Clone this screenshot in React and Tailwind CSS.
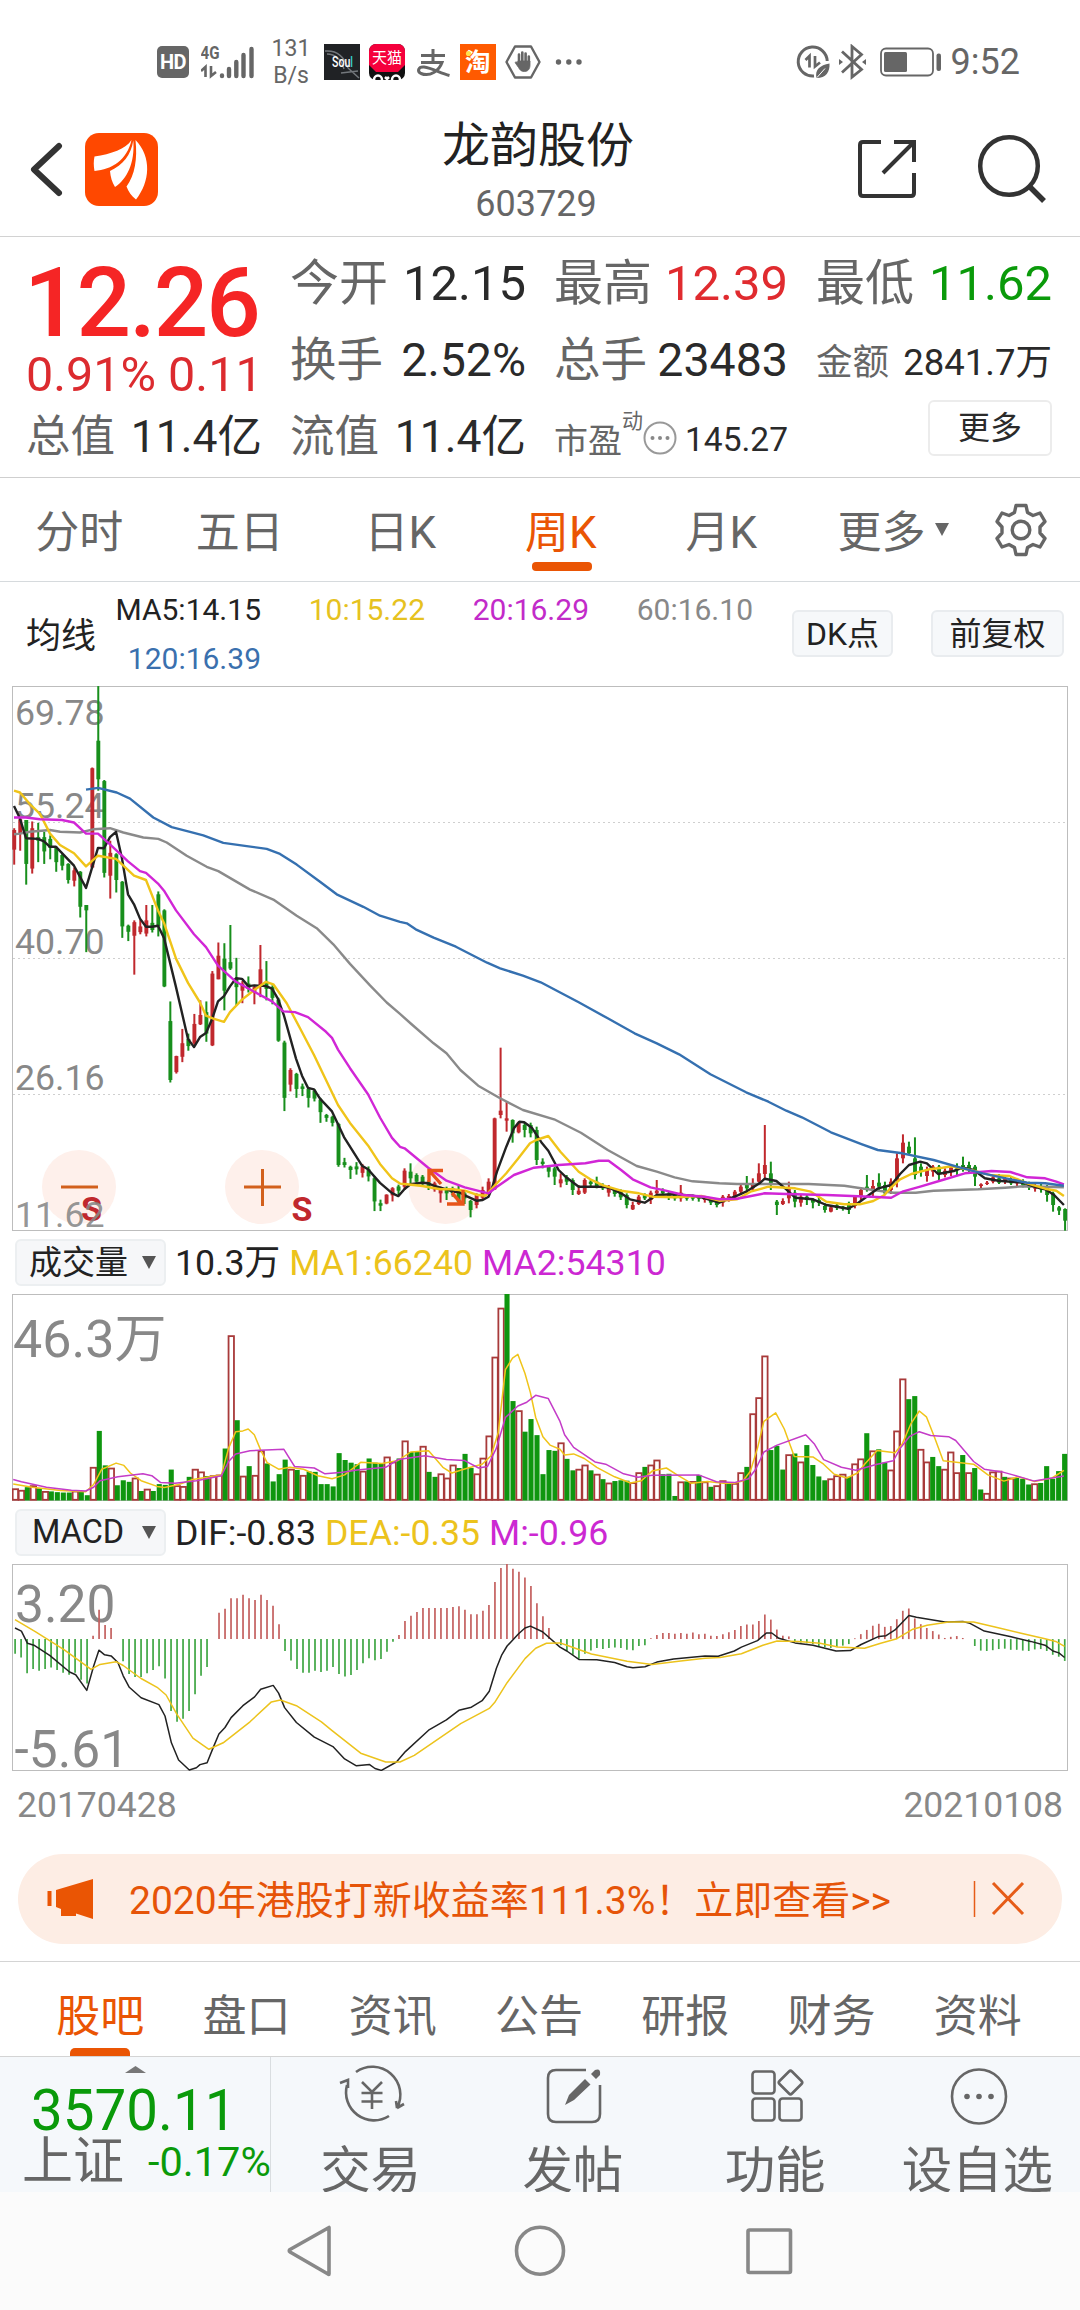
import clsx from 'clsx'

// Weekly K-line screen for a single stock: quote summary, candles + MA lines,
// volume, MACD, promo banner and the bottom action bar.

const RED = '#c0282d'
const GREEN = '#188f1c'
const STEP = 6.005

// colour, high, low, body top, body bottom (one entry per week)
const EARLY = `r 415 517 420 475;r 385 478 390 430;g 392 573 392 515;r 396 542 415 528;g 400 510 440 450;g 425 515 440 480;g 435 502 445 470;g 465 537 470 510;g 485 533 490 520;g 513 570 515 560;r 525 578 533 562;g 535 665 537 635;g 630 762 630 645;r 245 527 247 525;g 17 310 170 278;g 280 553 283 540;r 450 612 484 548;g 485 595 488 560;g 563 722 565 690;g 685 731 688 705;r 673 825 678 716;r 670 712 690 706;r 630 718 673 710;g 630 707 680 700;g 592 718 600 690;g 642 860 645 858;g 900 1127 955 1120;r 1052 1102 1053 1098;r 977 1070 1017 1055;g 990 1038 1005 1025;r 935 1025 963 1018;r 897 966 938 964;g 900 1013 930 990;r 815 1025 822 1023;r 735 838 772 838;g 737 925 780 870;g 686 812 790 808;g 778 910 835 860;r 843 905 850 870;g 830 875 850 865;r 855 908 860 875;r 742 888 810 855;g 787 897 845 865;g 855 908 860 890;g 890 1013 895 1010;g 1010 1207 1015 1170;r 1087 1152 1092 1133;g 1100 1170 1103 1145;g 1130 1165 1138 1145;g 1143 1197 1145 1170;g 1145 1180 1150 1172;g 1170 1240 1175 1210;g 1215 1237 1218 1226;g 1220 1250 1223 1240;g 1240 1363 1243 1358;g 1338 1365 1350 1358;g 1360 1397 1363 1372;g 1350 1385 1362 1370;r 1355 1393 1362 1380;g 1362 1404 1370 1390;g 1390 1487 1395 1460;g 1455 1487 1465 1472;r 1440 1468 1441 1466;r 1420 1460 1423 1443;g 1413 1440 1418 1430`
const LATE = `r 805 870 812 860;g 790 850 815 835;g 820 855 825 845;g 825 860 830 850;g 840 870 845 860;r 845 875 850 868;r 860 908 865 880;g 860 900 865 880;g 860 890 865 880;g 858 915 870 905;g 875 912 880 895;g 900 952 903 930;r 880 925 885 915;r 860 900 870 893;r 835 885 845 880;r 653 870 655 868;r 443 655 632 645;r 605 695 655 662;g 658 728 660 700;r 665 700 668 697;g 668 712 675 690;g 668 712 675 700;g 680 795 690 780;g 775 805 785 792;g 795 832 800 815;g 800 855 805 830;r 820 862 838 850;g 825 855 832 845;g 835 885 840 870;r 855 885 872 882;r 835 882 840 878;g 840 862 845 852;g 830 865 845 858;g 850 870 855 865;r 855 890 862 878;g 865 890 870 882;g 868 900 875 892;g 880 925 885 915;r 905 930 915 928;r 885 915 890 912;g 880 900 885 895;r 872 912 878 900;r 840 885 872 880;g 865 885 872 880;g 875 900 880 892;g 882 902 885 895;r 855 905 878 895;g 882 902 886 896;g 884 902 888 896;g 885 905 888 896;r 888 908 890 900;g 892 915 896 908;g 900 922 905 915;r 885 920 890 908;r 882 905 888 898;r 870 900 875 893;r 853 885 860 875;g 828 880 850 865;r 835 872 850 865;r 790 848 820 845;r 675 840 795 822;g 785 870 820 850;g 900 945 905 915;r 895 915 903 912;r 845 910 865 895;g 870 922 878 905;r 885 920 890 908;g 882 915 890 900;g 895 925 898 908;g 892 918 900 908;g 910 938 918 930;r 915 937 922 935;g 912 930 916 924;g 918 932 920 926;g 905 942 915 930;r 885 925 890 918;r 862 900 870 890;g 825 875 860 870;r 840 892 858 868;g 820 870 848 860;g 845 885 855 880;r 835 882 845 870;r 760 862 775 840;r 703 790 728 775;g 725 765 740 760;g 712 838 775 825;g 790 830 800 815;r 800 845 808 828;r 795 830 800 815;g 795 842 800 820;r 805 832 812 825;r 795 828 802 815;g 790 825 798 806;g 770 815 795 810;g 785 820 795 810;g 795 858 800 830;r 850 865 853 858;r 843 855 848 852;r 825 850 832 845;g 822 852 835 848;r 828 852 835 845;g 830 855 840 850;r 835 858 840 850;g 838 862 845 855;g 845 870 852 862;r 852 875 857 866;g 850 878 858 868;g 855 905 860 885;g 875 935 880 915;g 918 945 922 932;g 925 992 927 962`

function parseCandles(src, oy, sy) {
  return src.split(';').map(row => {
    const [color, ...v] = row.split(' ')
    const [high, low, top, bottom] = v.map(n => oy + Number(n) / sy)
    return { color: color === 'r' ? RED : GREEN, high, low, top, bottom }
  })
}

const CANDLES = [...parseCandles(EARLY, 680, 2.8), ...parseCandles(LATE, 900, 3)]

// each line has an early and a late part, stored at different scales
const PRICE_SCALE = [[0, 680, 3, 2.8], [380, 900, 2.24, 3]]
const INDEX_SCALE = [[0, 1230, 2.8, 2.613], [520, 1230, 2.8, 2.613]]

const MA_LINES = [
  { color: '#8a8a8a', parts: [
    '42,432 60,430 90,425 150,420 180,425 240,427 280,418 330,415 370,427 430,441 475,445 500,455 560,492 620,523 655,535 750,587 820,615 890,660 950,695 1000,740 1050,795 1110,855 1160,903 1200,935',
    '70,372 120,430 149,460 180,510 220,557 269,595 320,630 390,658 450,698 510,750 575,798 620,815 660,832 700,844 760,850 800,852 960,852 1040,857 1089,867 1150,878 1200,878 1240,872 1340,868 1400,863 1440,859 1532,862'] },
  { color: '#222222', parts: [
    '42,353 60,388 78,443 114,445 132,452 150,467 168,467 222,520 258,582 294,470 312,471 330,440 348,425 366,500 384,600 402,628 420,668 438,691 456,691 474,688 492,722 528,860 564,1005 582,1028 600,1000 618,988 636,950 654,900 672,885 690,858 708,835 726,837 745,857 763,855 798,857 816,864 834,893 852,940 888,1060 906,1108 924,1142 942,1146 960,1172 996,1208 1032,1280 1086,1360 1104,1370 1140,1408 1176,1437 1195,1445',
    '55,867 68,853 95,848 108,850 122,858 149,868 163,875 176,876 190,886 216,902 230,900 243,890 250,868 262,815 283,740 300,685 312,665 323,667 340,683 363,730 377,752 400,810 417,832 445,860 500,860 517,865 540,880 560,898 593,908 620,885 660,883 700,887 720,892 760,908 800,887 820,875 850,850 862,836 888,843 910,868 930,893 970,898 1000,915 1049,926 1070,910 1090,890 1116,865 1145,855 1165,822 1185,795 1210,785 1225,790 1250,822 1285,813 1305,803 1330,810 1355,835 1385,842 1440,848 1470,862 1490,868 1510,885 1532,915'] },
  { color: '#f0c419', parts: [
    '42,310 60,315 90,348 120,375 150,430 180,462 222,485 258,522 294,492 348,501 366,516 402,548 438,560 474,645 492,680 528,780 564,848 600,903 618,940 640,948 672,957 690,930 726,895 763,868 798,845 820,852 860,905 900,975 942,1050 1014,1190 1050,1240 1104,1303 1140,1355 1176,1395 1200,1410',
    '60,853 95,858 135,868 163,868 190,872 216,884 236,887 256,858 283,820 310,775 336,730 350,720 377,708 404,755 445,815 471,838 500,856 540,872 580,880 610,890 660,892 720,888 760,902 800,898 830,875 870,860 930,865 965,875 1000,905 1040,913 1075,913 1105,903 1130,885 1145,862 1165,838 1190,822 1230,808 1260,803 1280,799 1330,812 1370,826 1410,828 1450,850 1490,866 1515,872 1532,888'] },
  { color: '#d126d6', parts: [
    '42,385 78,385 120,390 186,392 222,399 258,430 294,430 330,460 384,508 420,535 438,540 474,570 492,590 528,645 582,712 618,748 654,800 708,845 763,873 816,900 850,928 885,930 924,944 978,985 996,1002 1014,1035 1050,1087 1104,1160 1140,1225 1176,1282 1200,1307',
    '55,745 108,803 149,842 190,862 243,880 262,860 300,825 345,803 400,795 460,790 490,782 512,782 540,810 566,838 606,862 640,872 680,885 727,890 760,898 800,896 862,880 910,882 1000,885 1100,890 1145,893 1170,875 1210,860 1260,840 1310,820 1370,813 1412,816 1450,832 1490,835 1515,845 1532,853'] },
  { color: '#3570b0', parts: [
    '258,307 294,302 350,315 390,332 460,385 515,412 570,425 610,435 670,456 740,465 800,473 840,487 890,517 960,565 1010,600 1090,635 1140,660 1200,677',
    '60,70 80,88 120,113 170,140 240,188 269,205 320,227 360,247 445,307 510,355 570,400 620,430 670,463 740,523 820,577 870,605 910,632 945,652 1010,697 1080,733 1115,750 1170,760 1240,780 1300,803 1350,820 1412,838 1450,848 1490,850 1532,857'] },
]

const VOLUME = 'r676 r680 g672 r668 g675 r683 g683 g685 g686 g686 r682 g682 g693 r620 g525 g615 r622 g667 g654 g658 r648 g682 r677 g682 g664 g666 g626 r668 r670 g645 r625 r632 g643 r642 r640 g571 r276 g497 r643 g617 r641 r577 g610 g657 g638 g600 r625 g627 r641 g631 g632 g664 g664 g670 g583 g601 g608 g612 r630 g597 g608 g610 r593 r606 g597 r551 g580 g580 r565 g632 g645 r637 r648 r614 g622 g585 g622 r637 r596 r538 r332 r204 g167 g447 r472 g527 g494 g536 g638 g575 g577 r556 g598 g628 r625 r614 g628 r638 g651 r661 g656 g654 g655 r660 r634 g619 r614 r601 g638 g637 g695 r658 g657 r657 g640 r658 g671 r668 r655 g662 r662 r634 g619 r480 r438 r329 g575 g564 g626 r587 g584 r606 g562 g614 g644 g654 r650 r642 r638 g645 r611 r598 g531 r577 g573 g608 r627 r525 r389 g442 g434 r573 r606 g593 g617 r625 r580 r634 g588 r634 g622 g678 r688 r632 r630 g645 r648 g648 g650 g665 r663 g661 g617 g650 g630 g585'
  .split(' ')
  .map(s => ({ up: s[0] === 'r', y: 1230 + Number(s.slice(1)) / 2.613 }))

const VOLUME_LINES = [
  { color: '#f0c419', parts: [
    '37,664 90,672 170,681 240,684 262,665 285,625 325,609 347,615 365,635 395,655 440,670 460,673 500,665 540,652 620,640 640,570 660,527 680,525 695,520 712,535 730,575 748,608 780,625 812,620 850,625 890,642 930,650 965,640 1010,607 1070,610 1115,602 1150,580 1200,577 1240,620 1265,635 1310,622 1350,612 1375,590 1395,530 1415,365 1435,335 1450,325 1470,375 1485,425 1500,490 1520,540 1540,562 1568,573',
    '125,588 150,585 180,597 215,620 265,645 310,661 340,655 370,630 410,622 440,640 480,662 525,657 570,662 600,662 625,655 645,630 665,570 683,500 716,478 740,520 768,592 820,593 850,612 880,638 915,648 945,635 965,612 1000,576 1050,582 1070,560 1095,505 1118,473 1138,488 1160,540 1185,603 1270,612 1310,640 1355,656 1395,645 1440,657 1490,648 1523,628'] },
  { color: '#c43cc8', parts: [
    '37,652 60,658 130,672 200,680 240,682 262,672 280,655 330,645 400,637 425,642 450,660 490,662 550,655 620,642 640,605 660,585 700,577 795,573 825,618 880,622 910,637 960,633 1000,627 1080,620 1115,600 1150,595 1190,590 1250,600 1300,602 1340,622 1365,618 1390,570 1415,490 1450,460 1475,450 1500,432 1535,440 1568,500',
    '125,535 150,568 210,606 240,612 290,637 330,646 370,641 500,640 550,658 600,660 640,650 660,625 683,580 720,562 800,535 825,560 850,600 900,620 940,628 1000,612 1045,603 1065,570 1090,540 1118,527 1150,537 1200,540 1220,550 1270,605 1300,625 1350,632 1380,640 1440,656 1490,648 1523,643'] },
]

// bar ends; 1069 is the zero line, 0 means no bar
const ZERO = 1069
const MACD_BARS = [
  1107, 1117, 1158, 1147, 1152, 1147, 1143, 1150, 1157, 1162, 1157, 1175, 1185, 1060, 992, 1032, 1040, 0, 1127, 1160,
  1168, 1168, 1158, 1150, 1140, 1172, 1257, 1285, 1277, 1257, 1213, 1165, 1142, 0, 1000, 990, 962, 962, 953, 962,
  967, 953, 967, 982, 1030, 1100, 1125, 1147, 1157, 1157, 1152, 1155, 1152, 1142, 1160, 1167, 1163, 1150, 1132, 1119,
  1124, 1121, 1102, 1076, 1058, 1022, 1008, 998, 988, 988, 988, 988, 988, 985, 983, 992, 1004, 1004, 995, 980,
  920, 883, 872, 885, 893, 908, 930, 975, 1009, 1040, 0, 1085, 1100, 1110, 1120, 1107, 1099, 1092, 1095, 1092,
  1091, 1092, 1097, 1098, 1087, 1085, 1067, 1058, 1053, 1053, 1055, 1053, 1055, 1052, 1056, 1055, 1060, 1061, 1056, 1051,
  1045, 1035, 1031, 1031, 1022, 1005, 1018, 1044, 1060, 1062, 1076, 1078, 1080, 1082, 1087, 1090, 1092, 1090, 1086, 1082,
  1067, 1056, 1045, 1034, 1029, 1037, 1035, 1017, 995, 989, 1015, 1030, 1040, 1048, 1057, 1066, 1063, 1061, 1066, 0,
  1087, 1099, 1100, 1098, 1095, 1094, 1097, 1097, 1099, 1100, 1096, 1095, 1100, 1110, 1115, 1126,
]

const MACD_LINES = [
  { color: '#222222', parts: [
    '42,1040 60,1048 77,1080 95,1085 140,1112 195,1155 212,1162 243,1203 262,1140 277,1098 293,1110 311,1113 330,1130 345,1165 362,1195 395,1222 445,1240 462,1270 480,1340 500,1385 530,1411 550,1405 560,1397 580,1392 598,1350 613,1317 630,1300 647,1274 680,1243 713,1220 730,1200 765,1190 780,1210 797,1248 830,1287 880,1325 932,1350 965,1382 998,1400 1035,1397 1050,1407 1068,1412 1110,1390 1135,1363 1200,1307 1250,1280 1285,1255 1320,1247 1350,1230 1370,1205 1390,1145 1405,1110 1420,1087 1452,1055 1470,1040 1485,1035 1519,1050 1568,1090',
    '131,1100 165,1122 215,1123 265,1130 300,1141 316,1144 350,1141 383,1129 430,1121 518,1113 555,1114 600,1100 620,1090 665,1073 690,1053 705,1053 725,1067 770,1079 820,1085 885,1100 925,1099 955,1083 1005,1062 1025,1060 1050,1045 1089,1007 1110,1012 1190,1024 1240,1023 1260,1028 1300,1048 1375,1063 1430,1075 1470,1085 1492,1100 1509,1105 1525,1117'] },
  { color: '#ecc31c', parts: [
    '42,1018 100,1050 180,1097 255,1148 280,1135 325,1128 345,1138 395,1172 440,1195 465,1215 495,1265 540,1328 585,1357 625,1340 700,1285 760,1233 785,1228 830,1243 900,1285 930,1308 1010,1367 1080,1390 1120,1390 1160,1373 1290,1290 1370,1250 1385,1235 1420,1183 1470,1120 1500,1093 1530,1080 1568,1079',
    '131,1085 200,1108 300,1127 370,1135 450,1126 518,1119 560,1117 620,1107 680,1085 720,1074 780,1075 840,1080 890,1090 965,1093 1010,1080 1055,1068 1100,1043 1140,1033 1200,1024 1270,1024 1330,1037 1400,1053 1470,1068 1500,1075 1525,1088'] },
]

function toPoints(parts, scales) {
  return parts
    .map((part, i) => {
      const [ox, oy, sx, sy] = scales[i]
      return part.split(' ').map(p => {
        const [x, y] = p.split(',').map(Number)
        return `${(ox + x / sx).toFixed(1)},${(oy + y / sy).toFixed(1)}`
      }).join(' ')
    })
    .join(' ')
}

function Lines({ lines, scales, width }) {
  return lines.map(l => (
    <polyline key={l.color} points={toPoints(l.parts, scales)} fill="none" stroke={l.color} strokeWidth={width} strokeLinejoin="round" />
  ))
}

function PriceChart() {
  return (
    <svg className="block ml-3" width="1056" height="545" viewBox="12 686 1056 545">
      <rect x="12.5" y="686.5" width="1055" height="544" fill="none" stroke="#bdbdbd" />
      {[822.5, 958.5, 1094.5].map(y => (
        <line key={y} x1="13" x2="1067" y1={y} y2={y} stroke="#cfcfcf" strokeDasharray="2 3" />
      ))}
      <g fill="#888888" fontFamily="Roboto, sans-serif" fontSize="35.7">
        <text x="15" y="725">69.78</text>
        <text x="15" y="817.5">55.24</text>
        <text x="15" y="953.5">40.70</text>
        <text x="15" y="1089.5">26.16</text>
      </g>
      {[79, 262, 445.5].map(x => <circle key={x} cx={x} cy="1187" r="37" fill="#fef0eb" />)}
      {CANDLES.map((c, i) => {
        const x = 14.2 + i * STEP
        return (
          <g key={i} fill={c.color}>
            <rect x={x - 1} y={c.high} width="2" height={c.low - c.high} />
            <rect x={x - 1.9} y={c.top} width="3.9" height={c.bottom - c.top} />
          </g>
        )
      })}
      <Lines lines={MA_LINES} scales={PRICE_SCALE} width="2.4" />
      <g fill={RED} fontFamily="Roboto, sans-serif" fontSize="34" fontWeight="700">
        <text x="81" y="1221">S</text>
        <text x="291.5" y="1221">S</text>
      </g>
      <text x="15" y="1226.5" fill="#888888" fillOpacity="0.9" fontFamily="Roboto, sans-serif" fontSize="35.7">11.62</text>
      <g stroke="#d2601c" strokeWidth="3" fill="none">
        <path d="M61 1187H98M244 1187H281M262.500 1169V1206" />
        <path d="M429 1182V1170.500H443M430 1171.500L441 1184M452 1193L461 1203M463 1190V1204H447" stroke="#e8541a" strokeWidth="3.400" />
      </g>
    </svg>
  )
}

function VolumeChart() {
  const base = 1500
  return (
    <svg className="block ml-3" width="1056" height="207" viewBox="12 1294 1056 207">
      <rect x="12.5" y="1294.500" width="1055" height="206" fill="none" stroke="#bdbdbd" />
      {VOLUME.map((v, i) => {
        const x = 15.3 + i * 5.996
        return v.up
          ? <rect key={i} x={x - 2.6} y={v.y + 0.5} width="5.4" height={base - v.y - 0.7} fill="#ffffff" stroke="#a83a3a" strokeWidth="1.8" />
          : <rect key={i} x={x - 2.5} y={v.y} width="5.1" height={base - v.y + 0.5} fill="#0f960f" />
      })}
      <text x="13" y="1357" fill="#888888" className="font-[Roboto,'Noto_Sans_CJK_SC',sans-serif]" fontSize="52">46.3万</text>
      <Lines lines={VOLUME_LINES} scales={INDEX_SCALE} width="1.5" />
    </svg>
  )
}

function MacdChart() {
  const zero = 1230 + ZERO / 2.613
  return (
    <svg className="block ml-3" width="1056" height="207" viewBox="12 1564 1056 207">
      <rect x="12.5" y="1564.500" width="1055" height="206" fill="none" stroke="#bdbdbd" />
      <g fill="#888888" fontFamily="Roboto, sans-serif" fontSize="51.500">
        <text x="15" y="1621.500">3.20</text>
        <text x="14.500" y="1767">-5.61</text>
      </g>
      {MACD_BARS.map((v, i) => {
        if (!v) return null
        const x = 15.1 + i * 5.998
        return <line key={i} x1={x} x2={x} y1={zero} y2={1230 + v / 2.613} stroke={v > ZERO ? '#3fa643' : '#c4605f'} strokeWidth="1.7" />
      })}
      <Lines lines={MACD_LINES} scales={INDEX_SCALE} width="1.5" />
    </svg>
  )
}

function StatusBar() {
  return (
    <div className="flex h-[118px] items-start justify-between pl-[157px] pr-[60px] pt-[36px] text-[#666]">
      <div className="flex h-[52px] items-center">
        <div className="flex h-8 w-8 items-center justify-center rounded-[5px] bg-[#666] text-[20px] font-bold leading-none tracking-tight text-white">HD</div>
        <svg className="ml-3" width="54" height="34" viewBox="0 0 54 34">
          <text x="-0.500" y="13.500" fontFamily="Roboto, sans-serif" fontSize="18" fontWeight="700" fill="#666" textLength="19" lengthAdjust="spacingAndGlyphs">4G</text>
          <g stroke="#666" strokeWidth="2.600" fill="none">
            <path d="M4.500 32V22L0 26M10 21V31L15 27" />
          </g>
          <g stroke="#666" strokeWidth="4.400" strokeLinecap="round">
            <path d="M21 30.500V31M28 24V31M35.300 17V31M42.500 10V31M50.500 4V31" />
          </g>
        </svg>
        <div className="ml-[15px] w-[42px] text-center text-[23px] leading-[27px]">
          <div>131</div>
          <div>B/s</div>
        </div>
        <svg className="ml-[12px]" width="36" height="36" viewBox="0 0 36 36">
          <rect width="36" height="36" fill="#202225" />
          <path d="M1 7C12 6 20 12 24 24M3 10C12 10 17 15 20 25M24 24L35 34M17 29L34 27" fill="none" stroke="#73777c" strokeWidth="1.500" />
          <text x="8" y="23" fontFamily="Roboto, sans-serif" fontSize="15" fontWeight="500" fill="#fff" textLength="21" lengthAdjust="spacingAndGlyphs">
            Sou<tspan fill="#35d6d0">l</tspan>
          </text>
        </svg>
        <svg className="ml-[9px]" width="36" height="36" viewBox="0 0 36 36">
          <rect width="36" height="36" rx="7" fill="#111" />
          <path d="M7 0H29a7 7 0 0 1 7 7V21L29 28H7L0 21V7a7 7 0 0 1 7-7z" fill="#f5003c" />
          <text x="3" y="19" fontSize="15" fill="#fff" className="font-['Noto_Sans_CJK_SC',sans-serif]">天猫</text>
          <path d="M5 36a4 4.500 0 0 1 8 0M23 36a4 4.500 0 0 1 8 0M16 33l2 2 2-2" fill="none" stroke="#fff" strokeWidth="2.500" />
        </svg>
        <svg className="ml-[12px]" width="34" height="36" viewBox="0 0 34 36" fill="none" stroke="#666" strokeWidth="3">
          <path d="M4 11.500H28M16 5V17.500M4 18.500H25C22 27 13 33 4 29.500 0 27.500 1 22.500 7 23 15 24 23 29 32.500 31.500" />
        </svg>
        <svg className="ml-[9px]" width="36" height="36" viewBox="0 0 36 36">
          <rect width="36" height="36" fill="#ff5a00" />
          <text x="5" y="27" fontSize="25.500" fontWeight="700" fill="#fff" className="font-['Noto_Sans_CJK_SC',sans-serif]">淘</text>
          <circle cx="8.500" cy="9.500" r="2.600" fill="#ffe14a" />
        </svg>
        <svg className="ml-[9px]" width="36" height="36" viewBox="0 0 36 36" fill="none" stroke="#666">
          <path d="M10 2.500H26L34.500 18L26 33.500H10L1.500 18z" strokeWidth="2.400" strokeLinejoin="round" />
          <path d="M14 18V10.500M17.300 17V8.500M20.600 17V9.500M23.800 18V12.500" strokeWidth="2.600" strokeLinecap="round" />
          <path d="M12.800 17H25V21c0 4-2 6.500-5.500 6.500-3.500 0-4.500-1.500-6-4L10 18.500c1-1 2-.6 2.800.5z" fill="#666" strokeWidth="0.800" />
        </svg>
        <svg className="ml-[14px]" width="28" height="6" viewBox="0 0 28 6" fill="#666">
          <circle cx="3.500" cy="3" r="2.700" /><circle cx="13.800" cy="3" r="2.700" /><circle cx="24" cy="3" r="2.700" />
        </svg>
      </div>
      <div className="flex h-[52px] items-center">
        <svg width="34" height="34" viewBox="0 0 34 34" fill="none" stroke="#666">
          <path d="M31.200 16A14.500 14.500 0 1 0 18 31" strokeWidth="3" />
          <path d="M13.500 22.500V11L9.500 15M19 11V21.500L24 17.500" strokeWidth="2.700" />
          <path d="M20.500 33C18.500 25 24 20 33.500 18.500 34 27 30 33 20.500 33z" fill="#666" stroke="none" />
          <path d="M21 32.500L29 23.500" stroke="#fff" strokeWidth="1" />
        </svg>
        <svg className="ml-[9px]" width="28" height="36" viewBox="0 0 28 36" fill="none" stroke="#666" strokeWidth="2.800">
          <path d="M3 7.500L22.500 25.500L13 33V2.500L22.500 10.500L3 28.500" />
          <path d="M0 15l4 3-4 3zM27 15l-4 3 4 3z" fill="#666" stroke="none" />
        </svg>
        <svg className="ml-[13px]" width="62" height="30" viewBox="0 0 62 30">
          <rect x="1" y="1.500" width="52" height="27" rx="5" fill="none" stroke="#666" strokeWidth="1.800" />
          <rect x="4" y="5" width="23" height="20" rx="1.500" fill="#666" />
          <rect x="56.500" y="6.500" width="4.500" height="17.500" rx="2" fill="#666" />
        </svg>
        <span className="ml-[9px] text-[36px] leading-[54px]">9:52</span>
      </div>
    </div>
  )
}

function Header() {
  return (
    <header className="grid h-[119px] grid-cols-[1fr_auto_1fr] border-b border-[#d2d2d2]">
      <div className="flex items-start pl-[28px] pt-[15px]">
        <svg className="mt-[8px]" width="36" height="56" viewBox="0 0 36 56" fill="none" stroke="#333" strokeWidth="6" strokeLinecap="round" strokeLinejoin="round">
          <path d="M31 5L6 28.500L31 52" />
        </svg>
        <svg className="ml-[21px]" width="73" height="73" viewBox="0 0 73 73">
          <rect width="73" height="73" rx="14" fill="#ff4800" />
          <g fill="#fff">
            <path d="M46.500 7C41 16 26 21 9.500 23.500C8.500 28 8.500 33 9.500 38C27 36.500 42 27 46.500 7z" />
            <path d="M48.300 7.500C46 22 38 32 25 38C25.500 44 27 49 30 54C42 46 50 30 48.300 7.500z" />
            <path d="M50.500 7C52.500 26 50 42 41.500 53.500C43.500 59 46.500 63 51 66.500C65 49 67 24 50.500 7z" />
          </g>
        </svg>
      </div>
      <div className="-mt-[1px] text-center">
        <h1 className="-ml-1 text-[48px] leading-[58px] text-[#222]">龙韵股份</h1>
        <p className="-ml-2 mt-[2px] text-[36px] leading-[54px] text-[#666]">603729</p>
      </div>
      <div className="flex items-start justify-end pr-[33px] pt-[16px]">
        <svg className="mt-[4px]" width="60" height="60" viewBox="0 0 60 60" fill="none" stroke="#333" strokeWidth="4">
          <path d="M24 4H6Q3 4 3 7V55Q3 58 6 58H54Q57 58 57 55V35" />
          <path d="M37 4H57V24M56 5L26 35" />
        </svg>
        <svg className="ml-[60px]" width="70" height="72" viewBox="0 0 70 72" fill="none" stroke="#333" strokeWidth="4.500">
          <circle cx="32" cy="32" r="28.800" />
          <path d="M52 52L67 67" strokeWidth="5.500" />
        </svg>
      </div>
    </header>
  )
}

function Cell({ label, value, size = 'text-[49px]', color = 'text-[#2a2a2a]' }) {
  return (
    <div className={clsx('flex h-[76px] items-start justify-between leading-[76px] whitespace-nowrap', size)}>
      <span className="text-[#666]">{label}</span>
      <span className={color}>{value}</span>
    </div>
  )
}

function Quote() {
  return (
    <section className="flex h-[241px] gap-[28px] border-b border-[#cfcfcf] pl-[26px] pr-[28px]">
      <div className="w-[236px] shrink-0 pt-[17px] whitespace-nowrap">
        <div className="-mx-[2px] text-[96px] font-medium leading-[98px] tracking-[-2px] text-[#f52525]">12.26</div>
        <div className="text-[48.500px] leading-[46px] text-[#dc2b2f]">0.91% 0.11</div>
        <Cell label="总值" value="11.4亿" size="text-[44.500px] pt-[1px]" />
      </div>
      <div className="grid flex-1 auto-rows-[76px] grid-cols-[236px_234px_236px] gap-x-[28px] pt-[9px]">
        <Cell label="今开" value="12.15" />
        <Cell label="最高" value="12.39" color="text-[#e02b2f]" />
        <Cell label="最低" value="11.62" color="text-[#0a9a0a]" />
        <Cell label="换手" value="2.52%" size="text-[46.500px]" />
        <Cell label="总手" value="23483" size="text-[46.500px]" />
        <Cell label="金额" value="2841.7万" size="text-[36.500px] pt-[3px]" />
        <Cell label="流值" value="11.4亿" size="text-[44.500px] pt-[1px]" />
        <div className="flex h-[76px] items-start leading-[76px] text-[#666]">
          <span className="pt-[5px] text-[34px]">市盈</span>
          <span className="text-[21px] leading-[46px]">动</span>
          <svg className="mt-[23px]" width="34" height="34" viewBox="0 0 34 34">
            <circle cx="17" cy="17" r="15.500" fill="none" stroke="#999" strokeWidth="2" />
            <circle cx="9.500" cy="17" r="2" fill="#888" /><circle cx="17" cy="17" r="2" fill="#888" /><circle cx="24.500" cy="17" r="2" fill="#888" />
          </svg>
          <span className="ml-auto pt-[4px] text-[33.500px] text-[#2a2a2a]">145.27</span>
        </div>
        <button className="mt-[2px] ml-auto h-[56px] w-[124px] rounded-md border-2 border-[#ececec] text-[32px] leading-[50px] text-[#2a2a2a]">更多</button>
      </div>
    </section>
  )
}

function PeriodTabs() {
  const tabs = ['分时', '五日', '日K', '周K', '月K']
  return (
    <nav className="flex h-[104px] border-b border-[#d6dadd] text-[44px] text-[#666]">
      {tabs.map(t => (
        <div key={t} className="w-[160.500px] pt-[17px] text-center">
          <div className={clsx('-ml-[2px] leading-[76px]', t === '周K' && 'text-[#ea5504]')}>{t}</div>
          {t === '周K' && <div className="mx-auto mt-[-9px] h-[9px] w-[60px] rounded-[4px] bg-[#ea5504]" />}
        </div>
      ))}
      <div className="flex pl-[35px] pt-[17px] leading-[76px]">
        更多
        <svg className="ml-[9px] mt-[28px]" width="14" height="13" viewBox="0 0 14 13"><path d="M0 0H14L7 13z" fill="#666" /></svg>
      </div>
      <svg className="ml-[45px] mt-[25px]" width="54" height="54" viewBox="0 0 54 54" fill="none" stroke="#666" strokeWidth="3.400" strokeLinejoin="round">
        <path d="M22 2.500H32L33.500 9.500L39 12.500L46 10L51 18.500L46 24V30L51 35.500L46 44L39 41.500L33.500 44.500L32 51.500H22L20.500 44.500L15 41.500L8 44L3 35.500L8 30V24L3 18.500L8 10L15 12.500L20.500 9.500z" />
        <circle cx="27" cy="27" r="8.800" />
      </svg>
    </nav>
  )
}

function MaLegend() {
  return (
    <div className="flex h-[104px] items-start">
      <div className="w-[95px] pl-[26px] pt-[30px] text-[35px] leading-[50px] whitespace-nowrap text-[#222]">均线</div>
      <div className="grid w-[658px] grid-cols-[166px_164px_164px_164px] pt-[3px] text-right text-[30px] leading-[49px]">
        <span className="text-[#222]">MA5:14.15</span>
        <span className="text-[#e6c21f]">10:15.22</span>
        <span className="text-[#c22bc9]">20:16.29</span>
        <span className="text-[#888]">60:16.10</span>
        <span className="text-[#3a70ae]">120:16.39</span>
      </div>
      <button className="ml-[39px] mt-[28px] h-[47px] w-[101px] rounded-md border-2 border-[#e9ecef] bg-[#f6f8fa] text-[32px] leading-[42px] text-[#222]">DK点</button>
      <button className="ml-[38px] mt-[28px] h-[47px] w-[133px] rounded-md border-2 border-[#e9ecef] bg-[#f6f8fa] text-[32px] leading-[42px] text-[#222]">前复权</button>
    </div>
  )
}

function IndexHeader({ name, children }) {
  return (
    <div className="flex h-[63px] items-center pl-[15px] text-[35.700px] leading-[63px] whitespace-nowrap">
      <div className="flex h-[47px] w-[151px] items-center justify-between rounded-md border-2 border-[#eceff1] bg-[#f6f7f9] pl-[12px] pr-[8px] text-[33px] text-[#222]">
        <span className={name === 'MACD' ? 'pl-[3px] text-[32.500px]' : ''}>{name}</span>
        <svg width="14" height="13" viewBox="0 0 14 13"><path d="M0 0H14L7 13z" fill="#555" /></svg>
      </div>
      <div className="flex gap-[9px] pl-[9px] pt-[2px]">{children}</div>
    </div>
  )
}

function Banner() {
  return (
    <div className="mx-[18px] flex h-[90px] items-center rounded-full bg-[#fdede4] pl-[29px] text-[#e65408]">
      <svg width="47" height="40" viewBox="0 0 47 40" fill="#ea5504">
        <rect x="0.500" y="12" width="4" height="15" />
        <path d="M9 11L46 0V40L29 34.500V37H14V30L9 28z" />
      </svg>
      <div className="ml-[35px] pt-[3px] text-[39px] leading-[88px] whitespace-nowrap">2020年港股打新收益率111.3%！立即查看&gt;&gt;</div>
      <svg className="ml-auto mr-[37px]" width="52" height="38" viewBox="0 0 52 38" fill="none" stroke="#e65c18">
        <path d="M1.500 1V37" strokeWidth="1.500" />
        <path d="M20 3L50 34M50 3L20 34" strokeWidth="3" />
      </svg>
    </div>
  )
}

function SectionTabs() {
  const tabs = ['股吧', '盘口', '资讯', '公告', '研报', '财务', '资料']
  return (
    <nav className="mt-[17px] grid h-[96px] grid-cols-7 border-y border-[#d4d4d4] pl-[27px] pr-[29px] text-center text-[44px] text-[#666]">
      {tabs.map(t => (
        <div key={t} className="pt-[17px]">
          <div className={clsx('leading-[76px]', t === '股吧' && 'text-[#ea5504]')}>{t}</div>
          {t === '股吧' && <div className="mx-auto -mt-[7px] h-[8px] w-[60px] rounded-t-[5px] bg-[#ea5504]" />}
        </div>
      ))}
    </nav>
  )
}

const ACTIONS = [
  {
    label: '交易',
    icon: (
      <>
        <path d="M17 8A28 28 0 0 1 58 44M58 44L57 37M58 44L65 40M50 52A28 28 0 0 1 8 21M1 19L9 16V24" />
        <path d="M23 18L33 28L43 18M33 28V45M22.500 29H43.500M22.500 37.500H43.500" />
      </>
    ),
  },
  {
    label: '发帖',
    icon: (
      <>
        <path d="M45 6H15Q7 6 7 14V50Q7 58 15 58H51Q59 58 59 50V21" />
        <path d="M24 41L28 31L44 15L49.500 20.500L33 36zM50 10L54 6Q60 4 59 11L55 15z" fill="#666" stroke="none" />
      </>
    ),
  },
  {
    label: '功能',
    icon: (
      <>
        <rect x="8.500" y="7.500" width="22" height="22" rx="3" />
        <rect x="8.500" y="34.500" width="22" height="22" rx="3" />
        <rect x="35.500" y="34.500" width="22" height="22" rx="3" />
        <path d="M45 7.500Q46.500 6 48 7.500L57.500 17Q59 18.500 57.500 20L48 29.500Q46.500 31 45 29.500L35.500 20Q34 18.500 35.500 17z" />
      </>
    ),
  },
  {
    label: '设自选',
    icon: (
      <>
        <circle cx="33" cy="32.500" r="27" />
        <g fill="#666" stroke="none"><circle cx="21" cy="32.500" r="2.800" /><circle cx="33" cy="32.500" r="2.800" /><circle cx="45" cy="32.500" r="2.800" /></g>
      </>
    ),
  },
]

function BottomBar() {
  return (
    <div className="flex h-[135px] overflow-hidden bg-[#f5f8fb]">
      <div className="w-[271px] border-r border-[#d9dde0] pt-[9px] whitespace-nowrap">
        <svg className="ml-[125px] block" width="21" height="7" viewBox="0 0 21 7"><path d="M0 7L10.500 0L21 7z" fill="#777" /></svg>
        <div className="mt-[10px] pl-[31px] text-[56.500px] leading-[56px] text-[#0a9a0a]">3570.11</div>
        <div className="flex pl-[22px]">
          <span className="text-[51px] leading-[46px] text-[#666]">上证</span>
          <span className="ml-[24px] text-[41.500px] leading-[46px] text-[#0a9a0a]">-0.17%</span>
        </div>
      </div>
      {ACTIONS.map(a => (
        <div key={a.label} className="flex-1 pt-[7px] text-center text-[50.500px] text-[#666] whitespace-nowrap">
          <svg className="mx-auto block" width="66" height="66" viewBox="0 0 66 66" fill="none" stroke="#666" strokeWidth="2.600">{a.icon}</svg>
          <div className="-ml-[3px] leading-[82px]">{a.label}</div>
        </div>
      ))}
    </div>
  )
}

function SystemNav() {
  return (
    <div className="flex h-[118px] items-start bg-[#fbfbfb] pl-[285px] pt-[32px]">
      <svg width="520" height="54" viewBox="285 2224 520 54" fill="none" stroke="#888" strokeWidth="3.600" strokeLinejoin="round">
        <path d="M329 2227.500V2274Q329 2275 328 2274L290 2252Q288.500 2250.700 290 2249.500z" />
        <circle cx="540" cy="2250.700" r="23.500" />
        <rect x="748" y="2230" width="42.500" height="42.500" rx="1.500" />
      </svg>
    </div>
  )
}

export default function App() {
  return (
    <div className="h-[2310px] w-[1080px] overflow-hidden bg-white font-[Roboto,'Noto_Sans_CJK_SC',sans-serif]">
      <StatusBar />
      <Header />
      <Quote />
      <PeriodTabs />
      <MaLegend />
      <PriceChart />
      <IndexHeader name="成交量">
        <span className="text-[#222]">10.3万</span>
        <span className="text-[#ecc31c]">MA1:66240</span>
        <span className="text-[#cc28d2]">MA2:54310</span>
      </IndexHeader>
      <VolumeChart />
      <IndexHeader name="MACD">
        <span className="text-[#222]">DIF:-0.83</span>
        <span className="text-[#ecc31c]">DEA:-0.35</span>
        <span className="text-[#cc28d2]">M:-0.96</span>
      </IndexHeader>
      <MacdChart />
      <div className="mb-[14px] flex h-[69px] justify-between pl-[17px] pr-[17px] text-[35.500px] leading-[69px] text-[#888]">
        <span>20170428</span>
        <span>20210108</span>
      </div>
      <Banner />
      <SectionTabs />
      <BottomBar />
      <SystemNav />
    </div>
  )
}
